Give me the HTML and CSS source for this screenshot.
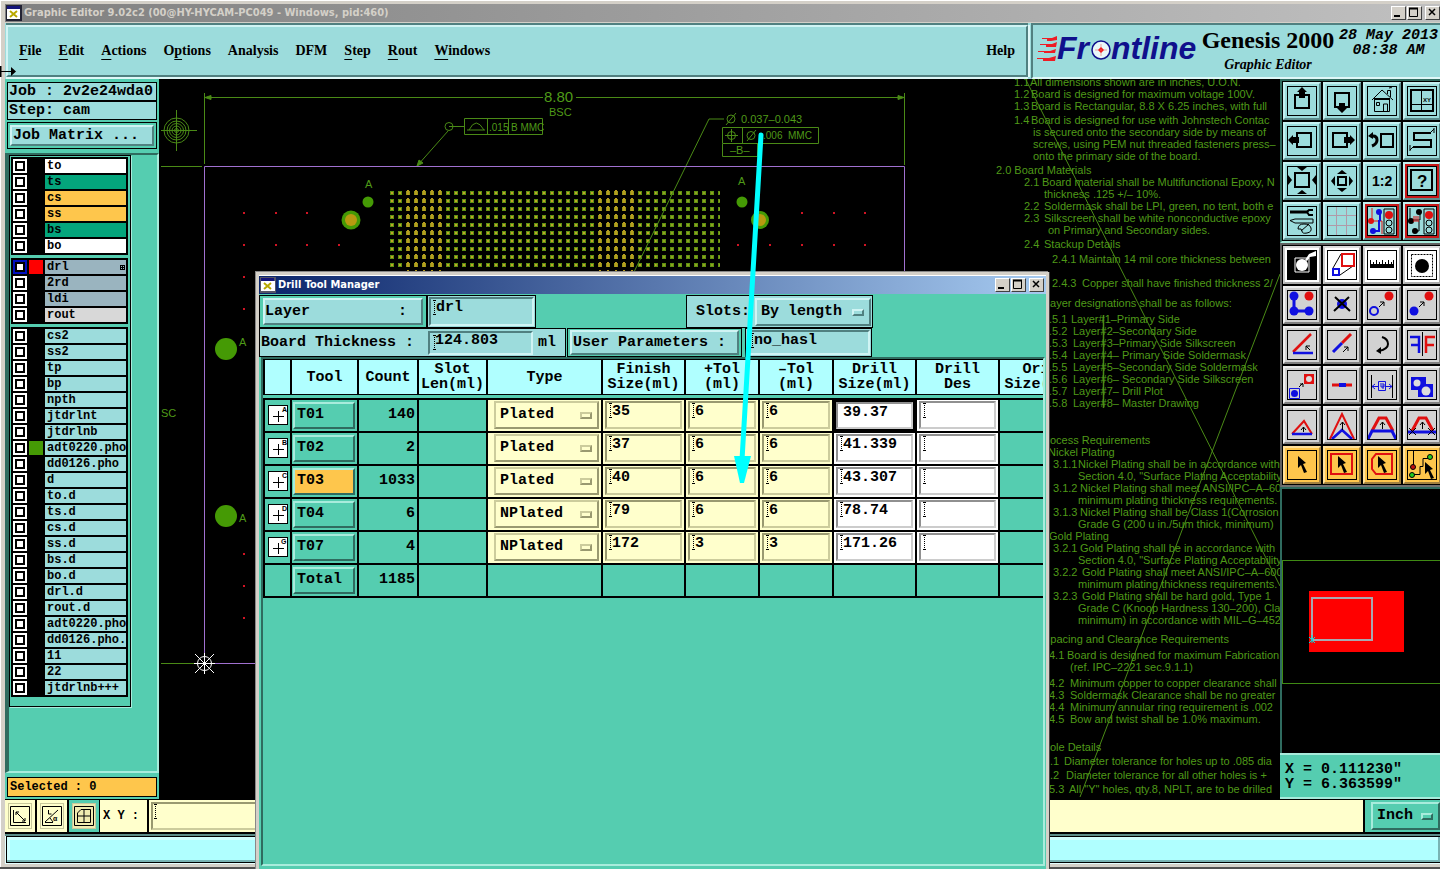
FILE: index.html
```html
<!DOCTYPE html>
<html lang="en">
<head>
<meta charset="utf-8">
<title>Graphic Editor 9.02c2</title>
<link rel="stylesheet" href="styles.css">
</head>
<body>
<div class="window">
  <header class="titlebar">
    <svg class="app-icon" width="16" height="16"><rect width="16" height="16" fill="#223"/><rect x="1" y="1" width="13" height="3" fill="#15157a"/><rect x="1" y="4" width="13" height="10" fill="#fff"/><path d="M4 6l7 6M11 6l-7 6" stroke="#b8a800" stroke-width="2"/></svg>
    <h1>Graphic Editor 9.02c2 (00@HY-HYCAM-PC049 - Windows, pid:460)</h1>
    <div class="win-buttons">
      <button class="wb" aria-label="Minimize"><svg width="12" height="11"><path d="M2 9h6" stroke="#000" stroke-width="2"/></svg></button>
      <button class="wb" aria-label="Maximize"><svg width="12" height="11"><path d="M1.500 1v8.500h8V1" fill="none" stroke="#000"/><path d="M1 1.500h9" stroke="#000" stroke-width="2"/></svg></button>
      <button class="wb close" aria-label="Close"><svg width="12" height="11"><path d="M3 2l6 6M9 2l-6 6" stroke="#000" stroke-width="1.500"/></svg></button>
    </div>
  </header>

  <div class="top">
    <nav class="menubar">
      <button><u>F</u>ile</button><button><u>E</u>dit</button><button><u>A</u>ctions</button><button>O<u>p</u>tions</button><button>Analysis</button><button>DFM</button><button><u>S</u>tep</button><button><u>R</u>out</button><button><u>W</u>indows</button><button class="help">Help</button>
    </nav>
    <div class="brand">
      <svg class="logo" width="164" height="40" aria-label="Frontline">
        <g fill="#ee1c24"><path d="M12 7h5l5-2v4l-6 1h-4zM11 13h6l5-2-1 5H11zM9 20h6l6-2-1 4H9zM8 27h6l7-2-1 5H8z"/><path d="M7 7.500h6M5 13.500h7M3 20.500h7M2 27.500h8" stroke="#ee1c24"/></g>
        <g font-family="Liberation Sans, sans-serif" font-size="32" font-weight="bold" font-style="italic" fill="#10108c"><text x="22" y="28">Fr</text><text x="76" y="28">ntline</text></g>
        <circle cx="66" cy="19" r="9" fill="#e8f8f8" stroke="#10108c" stroke-width="1.500"/>
        <path d="M66 16l3 3-3 3-3-3z" fill="#e00"/><path d="M60 19h12M66 13v12" stroke="#e66" stroke-width=".6"/>
      </svg>
      <div class="product"><strong>Genesis 2000</strong><em>Graphic Editor</em></div>
      <div class="clock">28 May 2013<br>08:38 AM</div>
    </div>
  </div>

  <main class="main">
    <aside class="side">
      <div class="job">Job : 2v2e24wda0</div>
      <div class="job second">Step: cam</div>
      <div class="matrix"><button>Job Matrix ...</button></div>
      <div class="well">
        <div class="layers">
          <div class="group">
            <label class="layer white"><input type="checkbox"><i></i><span>to</span></label>
            <label class="layer green"><input type="checkbox"><i></i><span>ts</span></label>
            <label class="layer gold"><input type="checkbox"><i></i><span>cs</span></label>
            <label class="layer gold"><input type="checkbox"><i></i><span>ss</span></label>
            <label class="layer green"><input type="checkbox"><i></i><span>bs</span></label>
            <label class="layer white"><input type="checkbox"><i></i><span>bo</span></label>
          </div>
          <div class="group">
            <label class="layer steel work"><input type="checkbox" checked><i class="red"></i><span>drl<svg width="5" height="5"><path d="M0 .5h5M0 2.500h5M0 4.500h5M.5 0v5M2.500 0v5M4.500 0v5" stroke="#000" shape-rendering="crispEdges"/></svg></span></label>
            <label class="layer steel"><input type="checkbox"><i></i><span>2rd</span></label>
            <label class="layer steel"><input type="checkbox"><i></i><span>ldi</span></label>
            <label class="layer gray"><input type="checkbox"><i></i><span>rout</span></label>
          </div>
          <div class="group">
            <label class="layer"><input type="checkbox"><i></i><span>cs2</span></label>
            <label class="layer"><input type="checkbox"><i></i><span>ss2</span></label>
            <label class="layer"><input type="checkbox"><i></i><span>tp</span></label>
            <label class="layer"><input type="checkbox"><i></i><span>bp</span></label>
            <label class="layer"><input type="checkbox"><i></i><span>npth</span></label>
            <label class="layer"><input type="checkbox"><i></i><span>jtdrlnt</span></label>
            <label class="layer"><input type="checkbox"><i></i><span>jtdrlnb</span></label>
            <label class="layer"><input type="checkbox"><i class="grn"></i><span>adt0220.pho</span></label>
            <label class="layer"><input type="checkbox"><i></i><span>dd0126.pho</span></label>
            <label class="layer"><input type="checkbox"><i></i><span>d</span></label>
            <label class="layer"><input type="checkbox"><i></i><span>to.d</span></label>
            <label class="layer"><input type="checkbox"><i></i><span>ts.d</span></label>
            <label class="layer"><input type="checkbox"><i></i><span>cs.d</span></label>
            <label class="layer"><input type="checkbox"><i></i><span>ss.d</span></label>
            <label class="layer"><input type="checkbox"><i></i><span>bs.d</span></label>
            <label class="layer"><input type="checkbox"><i></i><span>bo.d</span></label>
            <label class="layer"><input type="checkbox"><i></i><span>drl.d</span></label>
            <label class="layer"><input type="checkbox"><i></i><span>rout.d</span></label>
            <label class="layer"><input type="checkbox"><i></i><span>adt0220.pho</span></label>
            <label class="layer"><input type="checkbox"><i></i><span>dd0126.pho.d</span></label>
            <label class="layer"><input type="checkbox"><i></i><span>11</span></label>
            <label class="layer"><input type="checkbox"><i></i><span>22</span></label>
            <label class="layer"><input type="checkbox"><i></i><span>jtdrlnb+++</span></label>
          </div>
        </div>
      </div>
      <div class="selected">Selected : 0</div>
    </aside>

    <section class="canvas">
      <svg class="board" width="100%" height="100%">
        <defs>
          <pattern id="pads" x="388" y="189" width="8" height="8" patternUnits="userSpaceOnUse"><rect x="2" y="2" width="4" height="4" fill="#5f9212"/><rect x="3" y="3" width="2" height="2" fill="#c0a428"/></pattern>
          <pattern id="padsr" x="388" y="189" width="8" height="8" patternUnits="userSpaceOnUse"><rect x="2" y="2" width="4" height="4" fill="#5f9212"/><rect x="3" y="3" width="2" height="2" fill="#90a020"/></pattern>
          <pattern id="pads2" x="388" y="189" width="8" height="8" patternUnits="userSpaceOnUse"><rect x="2" y="2" width="4" height="4" fill="#94981a"/><rect x="3" y="1" width="2" height="5" fill="#b89c20"/></pattern>
        </defs>
        <g transform="translate(-159 -79)">
          <rect x="388" y="190" width="268" height="84" fill="url(#pads)"/>
          <rect x="656" y="190" width="64" height="84" fill="url(#padsr)"/>
          <rect x="404" y="190" width="40" height="84" fill="url(#pads2)"/>
          <rect x="596" y="190" width="40" height="84" fill="url(#pads2)"/>
          <g class="trace">
            <path d="M204.500 93v71M904.500 93v72M205 97.500h338M576 97.500h329M161 166.500h41M161 663.500h43M448 131L417 166M449 126.500h15M464.500 118.500h78v16h-78zM487.500 119v15M508.500 119v15M467 130h18M469 130q7-14 15 0M709 119h15M709 119L633 274M722.500 127.500h96v16h-96zM742.500 128v15M722.500 144v12.500h35V144M725 135.500h13M731.500 129v13M747 141l9-11M726 125l10-12"/>
            <circle cx="449" cy="126.500" r="4"/><circle cx="731.500" cy="135.500" r="4"/><circle cx="751" cy="135.500" r="4"/><circle cx="731" cy="119" r="4"/>
            <path d="M205 97.500l6-2v4zM904 97.500l-6-2v4zM417 166l2-6 4 3z" fill="#4a8a16"/>
            <circle cx="176.500" cy="130.500" r="2"/><circle cx="176.500" cy="130.500" r="4.500"/><circle cx="176.500" cy="130.500" r="7"/><circle cx="176.500" cy="130.500" r="9.500"/><circle cx="176.500" cy="130.500" r="12.500"/>
            <path d="M161 130.500h36M176.500 110v41"/>
            <path d="M1026 80L1280 586M1280 274L1080 797"/><path d="M1103.500 315v93" stroke-width="1.500"/>
          </g>
          <path class="profile" d="M204.500 663.500V166.500H904.500V664M204 663.500H905"/>
          <g fill="#459a05"><circle cx="226" cy="349" r="11"/><circle cx="226" cy="516" r="11"/><circle cx="368" cy="202" r="5.500"/><circle cx="742" cy="202" r="5.500"/><circle cx="351" cy="220" r="9.500"/><circle cx="760" cy="220" r="9"/></g>
          <g fill="#b89a10"><circle cx="351" cy="220" r="6"/><circle cx="760" cy="220" r="6"/></g>
          <path class="dots" d="M243 213h2M275 213h2M306 213h2M243 245h2M275 245h2M306 245h2M338 245h2M243 277h2M243 309h2M243 554h2M243 586h2M243 618h2M801 213h2M833 213h2M864 213h2M737 245h2M769 245h2M801 245h2M833 245h2M864 245h2"/>
          <g stroke="#fff" fill="none"><circle cx="204.500" cy="663.500" r="7"/><path d="M195 654l19 19M214 654l-19 19M204.500 653v21M194 663.500h21"/></g>
          <g class="cad">
            <text x="544" y="102" class="big">8.80</text><text x="549" y="116">BSC</text>
            <text x="489" y="131" class="tiny">.015</text><text x="511" y="131" class="tiny">B MMC</text>
            <text x="741" y="123">0.037–0.043</text><text x="763" y="139" class="tiny">.006</text><text x="788" y="139" class="tiny">MMC</text><text x="730" y="154">–B–</text>
            <text x="365" y="188">A</text><text x="738" y="185">A</text><text x="239" y="346">A</text><text x="239" y="522">A</text><text x="161" y="417">SC</text>
            <text x="1014" y="86">1.1</text><text x="1030" y="86">All dimensions shown are in inches, U.O.N.</text>
            <text x="1014" y="98">1.2</text><text x="1031" y="98">Board is designed for maximum voltage 100V.</text>
            <text x="1014" y="110">1.3</text><text x="1031" y="110">Board is Rectangular, 8.8 X 6.25 inches, with full</text>
            <text x="1014" y="124">1.4</text><text x="1031" y="124">Board is designed for use with Johnstech Contac</text>
            <text x="1033" y="136">is secured onto the secondary side by means of</text>
            <text x="1033" y="148">screws, using PEM nut threaded fasteners press–</text>
            <text x="1033" y="160">onto the primary side of the board.</text>
            <text x="996" y="174">2.0 Board Materials</text>
            <text x="1024" y="186">2.1</text><text x="1042" y="186">Board material shall be Multifunctional Epoxy, N</text>
            <text x="1044" y="198">thickness .125 +/– 10%.</text>
            <text x="1024" y="210">2.2</text><text x="1044" y="210">Soldermask shall be LPI, green, no tent, both e</text>
            <text x="1024" y="222">2.3</text><text x="1044" y="222">Silkscreen shall be white nonconductive epoxy</text>
            <text x="1048" y="234">on Primary and Secondary sides.</text>
            <text x="1024" y="248">2.4</text><text x="1044" y="248">Stackup Details</text>
            <text x="1052" y="263">2.4.1</text><text x="1079" y="263">Maintain 14 mil core thickness between</text>
            <text x="1052" y="287">2.4.3</text><text x="1082" y="287">Copper shall have finished thickness 2/</text>
            <text x="1044" y="307">Layer designations shall be as follows:</text>
            <text x="1049" y="323">.5.1</text><text x="1071" y="323">Layer#1–Primary Side</text>
            <text x="1049" y="335">.5.2</text><text x="1073" y="335">Layer#2–Secondary Side</text>
            <text x="1049" y="347">.5.3</text><text x="1073" y="347">Layer#3–Primary Side Silkscreen</text>
            <text x="1049" y="359">.5.4</text><text x="1073" y="359">Layer#4– Primary Side Soldermask</text>
            <text x="1049" y="371">.5.5</text><text x="1073" y="371">Layer#5–Secondary Side Soldermask</text>
            <text x="1049" y="383">.5.6</text><text x="1073" y="383">Layer#6– Secondary Side Silkscreen</text>
            <text x="1049" y="395">.5.7</text><text x="1073" y="395">Layer#7– Drill Plot</text>
            <text x="1049" y="407">.5.8</text><text x="1073" y="407">Layer#8– Master Drawing</text>
            <text x="1039" y="444">Process Requirements</text>
            <text x="1048" y="456">Nickel Plating</text>
            <text x="1053" y="468">3.1.1</text><text x="1078" y="468">Nickel Plating shall be in accordance with</text>
            <text x="1078" y="480">Section 4.0, "Surface Plating Acceptability</text>
            <text x="1053" y="492">3.1.2</text><text x="1080" y="492">Nickel Plating shall meet ANSI/IPC–A–600</text>
            <text x="1078" y="504">minimum plating thickness requirements.</text>
            <text x="1053" y="516">3.1.3</text><text x="1080" y="516">Nickel Plating shall be Class 1(Corrosion</text>
            <text x="1078" y="528">Grade G (200 u in./5um thick, minimum)</text>
            <text x="1049" y="540">Gold Plating</text>
            <text x="1053" y="552">3.2.1</text><text x="1080" y="552">Gold Plating shall be in accordance with</text>
            <text x="1078" y="564">Section 4.0, "Surface Plating Acceptability</text>
            <text x="1053" y="576">3.2.2</text><text x="1082" y="576">Gold Plating shall meet ANSI/IPC–A–600</text>
            <text x="1078" y="588">minimum plating thickness requirements.</text>
            <text x="1053" y="600">3.2.3</text><text x="1082" y="600">Gold Plating shall be hard gold, Type 1</text>
            <text x="1078" y="612">Grade C (Knoop Hardness 130–200), Class</text>
            <text x="1078" y="624">minimum) in accordance with MIL–G–45204</text>
            <text x="1043" y="643">Spacing and Clearance Requirements</text>
            <text x="1049" y="659">4.1</text><text x="1067" y="659">Board is designed for maximum Fabrication</text>
            <text x="1070" y="671">(ref. IPC–2221 sec.9.1.1)</text>
            <text x="1049" y="687">4.2</text><text x="1070" y="687">Minimum copper to copper clearance shall</text>
            <text x="1049" y="699">4.3</text><text x="1070" y="699">Soldermask Clearance shall be no greater</text>
            <text x="1049" y="711">4.4</text><text x="1070" y="711">Minimum annular ring requirement is .002</text>
            <text x="1049" y="723">4.5</text><text x="1070" y="723">Bow and twist shall be 1.0% maximum.</text>
            <text x="1042" y="751">Hole Details</text>
            <text x="1050" y="765">.1</text><text x="1064" y="765">Diameter tolerance for holes up to .085 dia</text>
            <text x="1050" y="779">.2</text><text x="1066" y="779">Diameter tolerance for all other holes is +</text>
            <text x="1049" y="793">5.3</text><text x="1069" y="793">All "Y" holes, qty.8, NPLT, are to be drilled</text>
          </g>
        </g>
      </svg>
    </section>

    <aside class="tools">
      <div class="pad aqua">
        <button><svg><path d="M8 9h14v13H8z" class="k2"/><path d="M15 1l5 5h-2v6h-6V6h-2z"/></svg></button>
        <button><svg><path d="M8 7h14v14H8z" class="k2"/><path d="M15 27l5-5h-2v-5h-6v5h-2z"/></svg></button>
        <button><svg><path d="M5 14L15 4l11 10M7.500 13v12.500h15V13M16.500 25v-7h4v7M9.500 16.500h3v3h-3zM20.500 8V4.500h3V11M22 2q3-1 3 0" class="k1"/><path d="M7 13h16" class="k2"/></svg></button>
        <button><svg><path d="M4 4h22v21H4z" class="k2"/><path d="M14.500 4v21M4 18.500h22" class="k1"/><text x="16" y="16" font-size="6">XY</text></svg></button>

        <button><svg><path d="M10 7h14v14H10z" class="k2"/><path d="M1 14l5-5v2h6v6H6v2z"/></svg></button>
        <button><svg><path d="M6 7h14v14H6z" class="k2"/><path d="M28 14l-5-5v2h-6v6h6v2z"/></svg></button>
        <button><svg><path d="M14 8h12v13H14z" class="k2"/><path d="M5 20q5-2 5-6t-4-4" class="k3"/><path d="M1 10l5-4v7z"/></svg></button>
        <button><svg><path d="M24 7H7v7h17v7H6" class="k2"/><path d="M24 6l3-3M6 21l-3 3M3 19v6M27 2v5" class="k1"/></svg></button>

        <button><svg><path d="M8 7h14v14H8z" class="k2"/><path d="M10 1h10l-5 4zM10 28h10l-5-4zM1 9v10l4-5zM29 9v10l-4-5z"/></svg></button>
        <button><svg><path d="M11 11h8v8h-8z" class="k2"/><path d="M10 8h10l-5-4zM10 22h10l-5 4zM8 10v10l-4-5zM22 10v10l4-5z"/></svg></button>
        <button><svg><text x="5" y="20" font-size="14">1:2</text></svg></button>
        <button class="hot"><svg><path d="M4 4h21v20H4z" class="k2"/><text x="10" y="21" font-size="17">?</text></svg></button>

        <button><svg><path d="M3 6h18" class="k3"/><path d="M26 4h-4l-2 2 2 3h4" class="k2"/><path d="M3 14.500l5-1.500h18v4H8zM11 23q0-5 6-5t7 4-4 5-5-2-4-2z" class="k1"/><path d="M14 25l8-7" class="k1"/></svg></button>
        <button><svg><path d="M9.500 1v28M19.500 1v28M1 9.500h28M1 19.500h28" stroke="#b09aa8"/></svg></button>
        <button class="hot"><svg><path d="M5 2v13h10v13" stroke="#e01010" fill="none"/><path d="M13 6v9M6 25h6V14" stroke="#1010e0" fill="none" stroke-width="2"/><circle cx="12" cy="6" r="3" fill="#1010e0"/><circle cx="6" cy="25" r="3" fill="#1010e0"/><circle cx="4" cy="15" r="3" fill="#e01010"/><path d="M17 3h10v25H17z" class="k1"/><circle cx="22" cy="9" r="4" fill="#e01010"/><circle cx="22" cy="17" r="3" class="k1"/><circle cx="22" cy="24" r="3" class="k1"/></svg></button>
        <button class="hot"><svg><path d="M3 2v12h10V6M7 25h5V15" class="k1"/><circle cx="12" cy="6" r="3"/><circle cx="8" cy="25" r="3"/><circle cx="4" cy="15" r="3"/><path d="M7 10v6M9 10v6M11 10v6" stroke="#e01010"/><path d="M17 3h10v25H17z" class="k1"/><circle cx="22" cy="9" r="4" fill="#e01010"/><circle cx="22" cy="17" r="3" class="k1"/><circle cx="22" cy="24" r="3" class="k1"/></svg></button>
      </div>
      <div class="pad silver">
        <button class="w"><svg><path d="M1 1h28v28H1z"/><path d="M8 8h14v14H8z" stroke="#fff" fill="none"/><circle cx="15" cy="15" r="6" fill="#fff"/><path d="M18 10l4-6 7-3v5l-6 1-3 4z" fill="#fff"/></svg></button>
        <button class="w"><svg><path d="M6 18L14 4M13 25l13-9" class="k1"/><path d="M15 4h12v12H15z" stroke="#e01010" stroke-width="2" fill="none"/><path d="M6 19h6v6H6z" stroke="#1010e0" stroke-width="2" fill="none"/></svg></button>
        <button class="w"><svg><path d="M3 14h24v4H3z"/><path d="M3.500 10v5M6.500 12v3M9.500 10v5M12.500 12v3M15.500 10v5M18.500 12v3M21.500 10v5M24.500 12v3M26.500 10v5" class="k1"/></svg></button>
        <button class="w"><svg><circle cx="15" cy="16" r="7"/><path d="M4.500 4.500h21v22h-21z" class="k1" stroke-dasharray="2 1"/></svg></button>

        <button><svg><path d="M7 6v15h15" stroke="#1010e0" stroke-width="3" fill="none"/><g fill="#1010e0"><circle cx="7" cy="6" r="4.500"/><circle cx="7" cy="21" r="4.500"/><circle cx="22" cy="21" r="4.500"/></g><circle cx="22" cy="6" r="4.500" fill="#e01010"/></svg></button>
        <button><svg><circle cx="15" cy="14" r="5" fill="#1010e0"/><path d="M8 7l15 14M22 7L7 21" class="k2"/></svg></button>
        <button><svg><circle cx="22" cy="6" r="4.500" fill="#e01010"/><circle cx="7" cy="21" r="4" stroke="#1010e0" stroke-width="2" fill="none"/><path d="M12 17l5-5M17 16v-4h-4" class="k1"/></svg></button>
        <button><svg><circle cx="22" cy="6" r="4.500" fill="#e01010"/><circle cx="7" cy="21" r="4.500" fill="#1010e0"/><path d="M12 17l5-5M17 16v-4h-4" class="k1"/></svg></button>

        <button><svg><path d="M6 22L24 4" stroke="#e01010" stroke-width="2.500"/><path d="M6 23h20" stroke="#1010e0" stroke-width="2.500"/><path d="M23 20l-4-4M19 20v-4h4" class="k1"/></svg></button>
        <button><svg><path d="M15 13l9-9" stroke="#e01010" stroke-width="3"/><path d="M6 22l9-9" stroke="#1010e0" stroke-width="3"/><path d="M16 22l5-5M21 21v-4h-4" class="k1"/></svg></button>
        <button><svg><path d="M15 7q6 2 6 7t-9 7" class="k2"/><path d="M9 21l5-4v7z"/></svg></button>
        <button><svg><path d="M15.500 2v24" class="k1"/><path d="M3 7h9v16M12 15H4" stroke="#1010e0" stroke-width="2.500" fill="none"/><path d="M28 7h-9v16M19 15h8" stroke="#e01010" stroke-width="2.500" fill="none"/></svg></button>

        <button><svg><path d="M17 4h10v10H17z" fill="#e01010"/><circle cx="22" cy="9" r="3" fill="#ddd"/><path d="M2.500 18.500h10v10h-10z" stroke="#1010e0" fill="none"/><circle cx="7.500" cy="23.500" r="3.500" fill="#1010e0"/><path d="M12 17l4-4M16 17v-3h-3" class="k1"/></svg></button>
        <button><svg><path d="M5 15h20" stroke="#e01010" stroke-width="3"/><path d="M12 15h7" stroke="#1010e0" stroke-width="4"/></svg></button>
        <button><svg><path d="M4.500 5v23M25.500 5v23" class="k1"/><path d="M5 16.500h6M19 16.500h6M8 14l-3 2.500L8 19M22 14l3 2.500-3 2.500M11.500 11.500h7v9h-7zM14 13v4h3v-3M16 13v6" stroke="#1010e0" fill="none"/></svg></button>
        <button><svg><path d="M4 7h15v7h7v13H11v-7H4z" fill="#1010e0"/><circle cx="10" cy="13" r="3.500" fill="#ddd"/><circle cx="19" cy="21" r="4.500" fill="#ddd"/></svg></button>

        <button><svg><path d="M5 24L17 11l8 13" stroke="#e01010" stroke-width="2" fill="none"/><path d="M5 24h20" stroke="#1010e0" stroke-width="2.500"/><path d="M16.500 22v-5M14 20l2.500-3 2.500 3" class="k1"/></svg></button>
        <button><svg><path d="M3 29L15 4l12 25" stroke="#e01010" stroke-width="2" fill="none"/><path d="M5 29l10-9 10 9" stroke="#1010e0" stroke-width="2.500" fill="none"/><path d="M15.500 20v-8M13 15l2.500-3 2.500 3" class="k1"/></svg></button>
        <button><svg><path d="M5 21L12 8h7l7 13" stroke="#e01010" stroke-width="3" fill="none"/><path d="M1 29l4-8h20l4 8" stroke="#1010e0" stroke-width="3" fill="none"/><path d="M15.500 19v-7M13 15l2.500-3 2.500 3" class="k1"/></svg></button>
        <button><svg><path d="M5 21L12 8h7l7 13" stroke="#e01010" stroke-width="3" fill="none"/><path d="M0 22h30" stroke="#1010e0" stroke-width="3"/><path d="M15.500 19v-7M13 15l2.500-3 2.500 3M2 18l7 7M9 18l-7 7M21 18l7 7M28 18l-7 7" class="k1"/></svg></button>

        <button class="o"><svg><path d="M11 6l8 7-3 1 4 8-3 1-3-8-3 3z"/></svg></button>
        <button class="o"><svg><path d="M4 4h21v20H4z" stroke="#e01010" stroke-width="2" fill="none"/><path d="M11 6l8 7-3 1 4 8-3 1-3-8-3 3z"/></svg></button>
        <button class="o"><svg><path d="M9 4h16v20H9l-4-5V9z" stroke="#e01010" stroke-width="2" fill="none"/><path d="M11 6l8 7-3 1 4 8-3 1-3-8-3 3z"/></svg></button>
        <button class="o"><svg><path d="M6.500 1v15M6 24.500h7v-8h3v-8h6" class="k1"/><circle cx="6" cy="17" r="2.500" fill="#c01010" stroke="#000"/><circle cx="5" cy="25" r="2.500" fill="#2c2" stroke="#000"/><circle cx="23" cy="7" r="2.500" fill="#2c2" stroke="#000"/><path d="M18 12l8 7-3 1 4 8-3 1-3-8-3 3z"/></svg></button>
      </div>
      <div class="overview">
        <svg width="100%" height="100%">
          <path d="M.5 71.500H170M.5 194.500H170M.5 71v124" stroke="#3f8a14"/>
          <rect x="27" y="102" width="95" height="61" fill="#f00"/>
          <rect x="30" y="109" width="60" height="42" fill="none" stroke="#a8a8b0" stroke-width="2"/>
          <path d="M27 148l6 6M33 148l-6 6M30 146v8" stroke="#0dd"/>
        </svg>
      </div>
      <div class="coords">X = 0.111230"<br>Y = 6.363599"</div>
    </aside>
  </main>

  <div class="entry">
    <button class="snap" aria-label="Distance"><svg width="20" height="20"><path d="M.5.500h19v19H.5zM3.500 4v12.500H16M6 6l9 9M6 9V6h3M15 12v3h-3" class="k1"/></svg></button>
    <button class="snap" aria-label="Angle"><svg width="20" height="20"><path d="M.5.500h19v19H.5zM3 16.500h8M3 16L16 4M6.500 4v4h3M8 12l3 4" class="k1"/><text x="11" y="15" font-size="7">α</text></svg></button>
    <button class="snap on" aria-label="Grid"><svg width="20" height="20"><path d="M.5.500h19v19H.5zM7 3.500h9.500v13h-13V7zM10 3v14M3 10h14" class="k1"/></svg></button>
    <label for="xy">X Y :</label>
    <span class="xy field"><input id="xy" type="text"></span>
    <span class="unit opt"><select aria-label="Unit"><option>Inch</option><option>MM</option></select></span>
  </div>
  <div class="message"><div></div></div>
</div>

<section class="dialog" aria-label="Drill Tool Manager">
  <header class="titlebar blue">
    <svg class="app-icon" width="16" height="16"><rect width="16" height="16" fill="#556"/><rect x="1" y="1" width="13" height="3" fill="#15157a"/><rect x="1" y="4" width="14" height="10" fill="#fff"/><path d="M4 6l7 6M11 6l-7 6" stroke="#b8a800" stroke-width="2"/></svg>
    <h2>Drill Tool Manager</h2>
    <div class="win-buttons">
      <button class="wb" aria-label="Minimize"><svg width="12" height="11"><path d="M2 9h6" stroke="#000" stroke-width="2"/></svg></button>
      <button class="wb" aria-label="Maximize"><svg width="12" height="11"><path d="M1.500 1v8.500h8V1" fill="none" stroke="#000"/><path d="M1 1.500h9" stroke="#000" stroke-width="2"/></svg></button>
      <button class="wb close" aria-label="Close"><svg width="12" height="11"><path d="M3 2l6 6M9 2l-6 6" stroke="#000" stroke-width="1.500"/></svg></button>
    </div>
  </header>
  <div class="form">
    <div class="row first">
      <div class="box layer-box"><button class="motif"><span>Layer</span><span>:</span></button></div>
      <div class="box name-box field"><input type="text" value="drl" aria-label="Layer"></div>
      <div class="box slots"><label for="slots">Slots:</label><span class="opt"><select id="slots"><option>By length</option></select></span></div>
    </div>
    <div class="row">
      <div class="box thick"><label for="thick">Board Thickness :</label><span class="field"><input id="thick" type="text" value="124.803"></span><span>ml</span></div>
      <div class="box user"><button class="motif">User Parameters :</button></div>
      <div class="box hasl field"><input type="text" value="no_hasl" aria-label="User parameters"></div>
    </div>
  </div>
  <div class="sheet">
    <table>
      <colgroup><col class="c-sym"><col class="c-tool"><col class="c-count"><col class="c-slot"><col class="c-type"><col class="c-size"><col class="c-tol"><col class="c-tol"><col class="c-size"><col class="c-size"><col class="c-size"></colgroup>
      <thead><tr><th></th><th>Tool</th><th>Count</th><th>Slot<br>Len(ml)</th><th>Type</th><th>Finish<br>Size(ml)</th><th>+Tol<br>(ml)</th><th>–Tol<br>(ml)</th><th>Drill<br>Size(ml)</th><th>Drill<br>Des</th><th>Orig<br>Size(ml)</th></tr></thead>
      <tbody>
        <tr><td><svg class="sym" width="20" height="20"><path d="M4 10.500h11M9.500 5v11" class="k1"/><text x="13" y="6">A</text></svg></td><td><button class="tool">T01</button></td><td class="num">140</td><td></td><td class="y"><span class="opt"><select aria-label="T01 type"><option>Plated</option></select></span></td><td class="y field"><input value="35" aria-label="Finish size"></td><td class="y field"><input value="6" aria-label="+Tol"></td><td class="y field"><input value="6" aria-label="-Tol"></td><td class="w focus"><input value="39.37" aria-label="Drill size"></td><td class="w field"><input aria-label="Drill des"></td><td></td></tr>
        <tr><td><svg class="sym" width="20" height="20"><path d="M4 10.500h11M9.500 5v11" class="k1"/><text x="13" y="6">B</text></svg></td><td><button class="tool">T02</button></td><td class="num">2</td><td></td><td class="y"><span class="opt"><select aria-label="T02 type"><option>Plated</option></select></span></td><td class="y field"><input value="37" aria-label="Finish size"></td><td class="y field"><input value="6" aria-label="+Tol"></td><td class="y field"><input value="6" aria-label="-Tol"></td><td class="w field"><input value="41.339" aria-label="Drill size"></td><td class="w field"><input aria-label="Drill des"></td><td></td></tr>
        <tr><td><svg class="sym" width="20" height="20"><path d="M4 10.500h11M9.500 5v11" class="k1"/><text x="13" y="6">C</text></svg></td><td><button class="tool sel">T03</button></td><td class="num">1033</td><td></td><td class="y"><span class="opt"><select aria-label="T03 type"><option>Plated</option></select></span></td><td class="y field"><input value="40" aria-label="Finish size"></td><td class="y field"><input value="6" aria-label="+Tol"></td><td class="y field"><input value="6" aria-label="-Tol"></td><td class="w field"><input value="43.307" aria-label="Drill size"></td><td class="w field"><input aria-label="Drill des"></td><td></td></tr>
        <tr><td><svg class="sym" width="20" height="20"><path d="M4 10.500h11M9.500 5v11" class="k1"/><text x="13" y="6">D</text></svg></td><td><button class="tool">T04</button></td><td class="num">6</td><td></td><td class="y"><span class="opt"><select aria-label="T04 type"><option>NPlated</option></select></span></td><td class="y field"><input value="79" aria-label="Finish size"></td><td class="y field"><input value="6" aria-label="+Tol"></td><td class="y field"><input value="6" aria-label="-Tol"></td><td class="w field"><input value="78.74" aria-label="Drill size"></td><td class="w field"><input aria-label="Drill des"></td><td></td></tr>
        <tr><td><svg class="sym" width="20" height="20"><path d="M4 10.500h11M9.500 5v11" class="k1"/><text x="12" y="6">G</text></svg></td><td><button class="tool">T07</button></td><td class="num">4</td><td></td><td class="y"><span class="opt"><select aria-label="T07 type"><option>NPlated</option></select></span></td><td class="y field"><input value="172" aria-label="Finish size"></td><td class="y field"><input value="3" aria-label="+Tol"></td><td class="y field"><input value="3" aria-label="-Tol"></td><td class="w field"><input value="171.26" aria-label="Drill size"></td><td class="w field"><input aria-label="Drill des"></td><td></td></tr>
        <tr><td></td><td><button class="tool">Total</button></td><td class="num">1185</td><td></td><td></td><td></td><td></td><td></td><td></td><td></td><td></td></tr>
      </tbody>
    </table>
  </div>
</section>

<svg class="arrow" width="40" height="360"><path d="M31 5L12 330" stroke="#0ff" stroke-width="5" stroke-linecap="round"/><path d="M4 326h17l-7 27h-4z" fill="#0ff"/></svg>
<svg class="cursor" width="17" height="11"><path d="M0 5.500h13" stroke="#000"/><path d="M11 1l5 4.500-5 4.500zM0 0h1.500v11H0z"/></svg>
</body>
</html>
```
FILE: styles.css
```css
:root {
  --aqua: #9cdcdc;
  --aqua-lt: #d0f4f4;
  --aqua-dk: #508080;
  --teal: #55cdb0;
  --teal-lt: #a8ecdc;
  --teal-dk: #2f6b5f;
  --cream: #ffffcc;
  --gold: #fec64c;
  --cyan: #b0ffff;
  --frame: #d4d0c8;
}
*, *::before, *::after { box-sizing: border-box; }
body {
  margin: 0;
  height: 100vh;
  overflow: hidden;
  position: relative;
  background: #000;
  color: #000;
  font: bold 15px/16px "Liberation Mono", monospace;
}
button, input, select { font: inherit; color: inherit; border-radius: 0; margin: 0; padding: 0; }
button { border: 0; background: none; text-align: left; }
input, select { appearance: none; outline: 0; }
svg { display: block; flex: none; }
.k1, .k2, .k3 { fill: none; stroke: #000; stroke-width: 1; }
.k2 { stroke-width: 2; }
.k3 { stroke-width: 3; }
svg text { font-family: "Liberation Sans", sans-serif; }

.window {
  height: 100vh;
  display: flex;
  flex-direction: column;
  background: var(--frame);
  padding: 4px 0 5px 5px;
  box-shadow: inset 0 -2px #505050, inset 1px 1px #fff;
}
.titlebar {
  display: flex;
  align-items: center;
  gap: 2px;
  height: 18px;
  padding-left: 1px;
  background: linear-gradient(90deg, #808080, #c0c0c0);
  color: var(--frame);
  overflow: hidden;
}
.titlebar h1, .titlebar h2 { margin: 0; font: bold 11px/18px "DejaVu Sans Condensed", "Noto Sans", sans-serif; white-space: nowrap; }
.window > .titlebar { margin-bottom: 1px; }
.blue { background: linear-gradient(90deg, #0a246a, #a6caf0); color: #fff; }
.win-buttons { margin-left: auto; display: flex; flex: none; gap: 1px; }
.wb {
  width: 15px;
  height: 14px;
  background: var(--frame);
  border: 1px solid;
  border-color: #fff #404040 #404040 #fff;
  display: flex;
}
.close { margin-left: 2px; }

.top { display: flex; height: 56px; background: var(--aqua); flex: none; }
.menubar {
  flex: 1;
  display: flex;
  align-items: center;
  gap: 17px;
  padding: 0 11px 0 11px;
  border: 2px solid;
  border-color: var(--aqua-lt) var(--aqua-dk) var(--aqua-dk) var(--aqua-lt);
  box-shadow: 0 -2px var(--aqua-dk), 0 2px #dff8f8, 2px 0 #dff8f8;
  margin: 2px 3px 2px 1px;
  font: bold 14px/20px "Liberation Serif", serif;
}
.menubar u { text-underline-offset: 4px; }
.help { margin-left: auto; }
.brand {
  width: 409px;
  display: flex;
  align-items: flex-start;
  border: 2px solid;
  border-width: 2px 0 2px 2px;
  border-color: var(--aqua-dk) #dff8f8 #dff8f8 var(--aqua-dk);
  padding-left: 2px;
  overflow: hidden;
}
.logo { margin-top: 6px; }
.product { width: 138px; font-family: "Liberation Serif", serif; text-align: center; padding-top: 2px; }
.product strong { display: block; font-size: 24px; line-height: 26px; }
.product em { display: block; font-size: 14px; line-height: 24px; }
.clock { flex: 1; font-style: italic; line-height: 15px; text-align: center; white-space: nowrap; padding-top: 3px; }

.main { flex: 1; min-height: 0; display: flex; background: #000; }
.side { width: 154px; display: flex; flex-direction: column; background: var(--teal); padding: 3px 2px 2px; }
.job { border: 1px solid #000; background: var(--aqua); height: 19px; line-height: 17px; padding-left: 1px; white-space: nowrap; overflow: hidden; }
.matrix { border: 1px solid #000; margin: 2px 0 4px; padding: 2px; height: 27px; }
.motif, .matrix button {
  display: block;
  width: 100%;
  height: 100%;
  border: 2px solid;
  border-color: var(--aqua-lt) var(--aqua-dk) var(--aqua-dk) var(--aqua-lt);
  background: var(--aqua);
  padding-left: 1px;
}
.well {
  flex: 1;
  min-height: 0;
  margin: 0 -2px 4px;
  border: 2px solid;
  border-width: 2px 2px 2px 4px;
  border-color: var(--teal-dk) var(--teal-lt) var(--teal-lt) var(--teal-dk);
}
.layers { width: 122px; border: 1px solid #000; padding: 1px 2px 9px 1px; display: flex; flex-direction: column; gap: 3px; box-shadow: 1px 1px var(--teal-lt); }
.group { background: #000; padding: 2px; display: flex; flex-direction: column; gap: 2px; }
.layer { display: flex; gap: 2px; height: 14px; font-size: 12px; line-height: 14px; }
.layer input { width: 14px; height: 14px; background: #fff; border: 2px solid #fff; box-shadow: inset 0 0 0 2px #000; }
.layer i { width: 14px; }
.layer span { flex: 1; min-width: 0; overflow: hidden; background: var(--aqua); padding-left: 2px; display: flex; align-items: center; justify-content: space-between; }
.layer svg { margin-right: 1px; }
.white span { background: #fff; }
.green span { background: #04a57c; }
.gold span { background: var(--gold); }
.steel span { background: #9ab4bf; }
.gray span { background: #d8d8d8; }
.layer .red { background: #f00; }
.layer .grn { background: #459a05; }
.work input { border-color: #0010c0; }
.selected { border: 1px solid #000; background: var(--gold); height: 20px; font-size: 12px; line-height: 18px; padding-left: 2px; }

.canvas { flex: 1; min-width: 0; overflow: hidden; background: #000; }
.trace { fill: none; stroke: #4a8a16; stroke-width: 1; }
.profile { fill: none; stroke: #a070d0; stroke-width: 1; }
.dots { stroke: #d01424; stroke-width: 2; }
.cad { fill: #4f9a18; font-size: 11px; font-weight: normal; }
.cad .big { font-size: 15px; }
.cad .tiny { font-size: 10px; }

.tools { width: 160px; display: flex; flex-direction: column; overflow: hidden; }
.pad {
  display: grid;
  grid-template-columns: repeat(4, 38px);
  gap: 2px;
  padding: 1px 0 1px 1px;
  background: #000;
  border: 2px solid;
  border-width: 2px 0 2px 2px;
  border-color: var(--teal-dk) #000 var(--teal-lt) var(--teal-dk);
}
.pad button { height: 38px; padding: 2px; border: 2px solid; }
.pad svg { width: 30px; height: 30px; outline: 1px solid #000; outline-offset: -1px; }
.aqua button { background: var(--aqua); border-color: #c4f0f0 #5c8c8c #5c8c8c #c4f0f0; }
.aqua svg { background: var(--aqua); }
.aqua .hot { background: #c81818; }
.silver { border-color: #606060 #000 #707070 #606060; }
.silver button { background: #d2d2d2; border-color: #eee #808080 #808080 #eee; }
.silver .w { background: #fff; border-color: #ddd #aaa #aaa #ccc; }
.silver .o { background: var(--gold); border-color: #ffe09a #a08040 #a08040 #ffe09a; }
.overview { flex: 1; min-height: 0; border-top: 2px solid var(--teal-dk); border-left: 2px solid var(--teal-dk); background: #000; }
.coords { height: 46px; background: var(--teal); border-top: 2px solid var(--teal-lt); border-bottom: 2px solid var(--teal-lt); padding: 7px 0 0 5px; line-height: 15px; white-space: nowrap; }

.entry { display: flex; gap: 2px; height: 35px; background: #000; padding: 1px 0 2px; font-size: 12px; flex: none; }
.snap { width: 30px; background: var(--cream); border: 3px solid var(--cream); padding: 2px; box-shadow: inset 0 0 0 1px #c8c89c; }
.snap.on { background: #f0ecb0; border-color: var(--teal); }
.entry label { width: 47px; margin-left: -1px; background: var(--cream); line-height: 32px; padding-left: 3px; white-space: nowrap; }
.field { position: relative; }
.field::before {
  content: "";
  position: absolute;
  left: 5px;
  top: 4px;
  width: 3px;
  height: 15px;
  background:
    repeating-linear-gradient(#000 0 1px, transparent 1px 2px) 1px 0 / 1px 100% no-repeat,
    linear-gradient(90deg, #000 1px, transparent 1px 2px, #000 2px) 0 0 / 3px 1px no-repeat,
    linear-gradient(90deg, #000 1px, transparent 1px 2px, #000 2px) 0 100% / 3px 1px no-repeat;
}
.field input, .focus input {
  display: block;
  width: 100%;
  height: 28px;
  border: 2px solid;
  border-color: #999970 #cccc9c #cccc9c #999970;
  background: var(--cream);
  padding: 0 0 7px 5px;
  line-height: 16px;
}
.xy { flex: 1; background: var(--cream); padding: 2px; }
.xy input { max-width: 800px; }
.opt { position: relative; display: block; }
.opt select {
  display: block;
  width: 100%;
  height: 100%;
  border: 2px solid;
  border-color: #cccc9c #999970 #999970 #cccc9c;
  background: var(--cream);
  padding-left: 4px;
}
.opt::after {
  content: "";
  position: absolute;
  right: 7px;
  top: 50%;
  width: 12px;
  height: 7px;
  margin-top: -3px;
  border: 2px solid;
  border-color: #cccc9c #999970 #999970 #cccc9c;
  pointer-events: none;
}
.unit { width: 75px; background: var(--teal); padding: 2px 0 2px 6px; font-size: 15px; }
.unit select, .unit::after { border-color: var(--teal-lt) var(--teal-dk) var(--teal-dk) var(--teal-lt); background: var(--teal); }
.message { height: 30px; flex: none; border-top: 2px solid #5c8c88; background: #e4ffff; padding-bottom: 1px; }
.message div { height: 27px; margin-left: 1px; border: 1px solid #000; border-right: 0; background: var(--cyan); box-shadow: inset -2px -2px #78b4b4, inset 3px 3px #d0ffff; }

.dialog {
  position: absolute;
  left: 256px;
  top: 272px;
  bottom: -4px;
  width: 793px;
  display: flex;
  flex-direction: column;
  background: var(--teal);
  border: 3px solid var(--frame);
  border-bottom: 0;
  box-shadow: -1px -1px #888, 1px 0 #404040;
}
.dialog .titlebar { flex: none; height: 19px; border-top: 1px solid #fff; margin-bottom: 1px; padding-right: 2px; }
.form { flex: none; }
.row { display: flex; height: 29px; }
.row.first { height: 33px; }
.box { border: 1px solid #000; display: flex; align-items: center; }
.layer-box { width: 168px; padding: 2px 3px; }
.layer-box .motif { display: flex; justify-content: space-between; align-items: center; padding: 0 14px 0 0; }
.name-box { width: 109px; background: var(--aqua); padding: 1px; }
.form .field input { background: var(--aqua); border-color: var(--aqua-dk) var(--aqua-lt) var(--aqua-lt) var(--aqua-dk); }
.name-box input { height: 29px; padding-bottom: 9px; }
.form .slots { margin-left: 150px; width: 187px; background: var(--aqua); padding: 1px 1px 1px 9px; gap: 5px; }
.slots .opt { flex: 1; height: 28px; }
.form .opt select, .form .opt::after { background: var(--aqua); border-color: var(--aqua-lt) var(--aqua-dk) var(--aqua-dk) var(--aqua-lt); }
.thick { width: 307px; background: var(--aqua); padding-left: 1px; gap: 9px; }
.thick label { width: 158px; white-space: nowrap; }
.thick .field { width: 105px; }
.thick > span:last-child { margin-left: -4px; }
.thick input { height: 24px; padding-bottom: 4px; }
.user { width: 175px; margin-left: 1px; padding: 1px 2px; }
.user .motif { white-space: nowrap; }
.hasl { width: 127px; background: var(--aqua); margin-left: 3px; padding: 1px; }
.hasl input { height: 25px; padding-bottom: 4px; }
.sheet {
  flex: 1;
  min-height: 0;
  overflow: hidden;
  margin: 0 1px 7px 2px;
  border: 2px solid;
  border-color: var(--teal-dk) var(--teal-lt) var(--teal-lt) var(--teal-dk);
}
table { table-layout: fixed; width: 820px; border-collapse: separate; border-spacing: 0; }
.c-sym { width: 29px; }
.c-tool { width: 67px; }
.c-count { width: 60px; }
.c-slot { width: 69px; }
.c-type { width: 115px; }
.c-size { width: 83px; }
.c-tol { width: 74px; }
th { height: 36px; padding: 0; background: var(--cyan); border: 1px solid #000; border-width: 1px 2px 1px 0; line-height: 15px; white-space: nowrap; overflow: hidden; }
th:first-child, td:first-child { border-left: 2px solid #000; }
tbody::before { content: ""; display: block; height: 3px; }
tbody tr:first-child td { border-top: 2px solid #000; height: 35px; }
td { height: 33px; padding: 1px 2px 2px; border: 0 solid #000; border-width: 0 2px 2px 0; }
.num { text-align: right; }
.y { background: var(--cream); }
.y .opt { height: 28px; margin-left: 4px; }
.w { background: #fff; }
.w input { background: #fff; border-color: #909090 #ccc #ccc #909090; }
td.field::before { left: 6px; top: 3px; }
tbody tr:first-child td.focus { padding: 1px 2px; box-shadow: inset 0 0 0 2px #000; }
.focus input { height: 27px; }
.tool { display: block; width: 62px; height: 27px; margin-left: -1px; border: 2px solid; border-color: var(--teal-lt) var(--teal-dk) var(--teal-dk) var(--teal-lt); padding-left: 2px; }
.tool.sel { background: var(--gold); }
.sym { background: #fff; border: 1px solid #000; margin-left: 1px; }
.sym text { font-size: 7px; font-weight: bold; }

.arrow { position: absolute; left: 730px; top: 130px; pointer-events: none; }
.cursor { position: absolute; left: 0; top: 66px; }
```
